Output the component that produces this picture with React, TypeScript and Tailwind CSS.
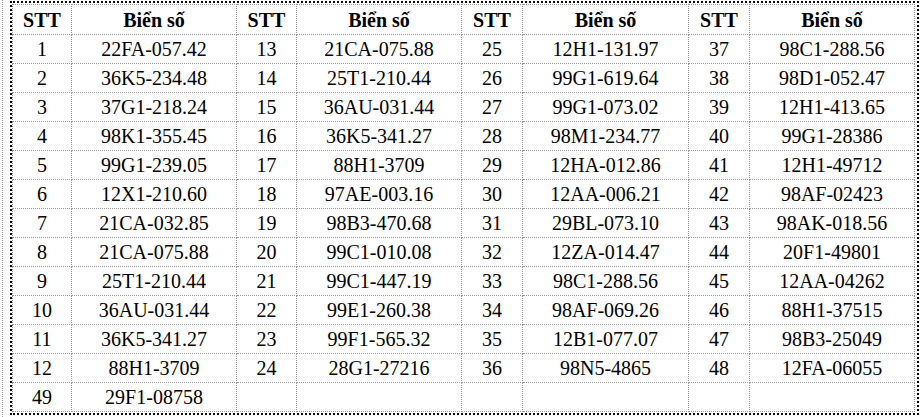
const columns = [
  [
    ["1", "22FA-057.42"],
    ["2", "36K5-234.48"],
    ["3", "37G1-218.24"],
    ["4", "98K1-355.45"],
    ["5", "99G1-239.05"],
    ["6", "12X1-210.60"],
    ["7", "21CA-032.85"],
    ["8", "21CA-075.88"],
    ["9", "25T1-210.44"],
    ["10", "36AU-031.44"],
    ["11", "36K5-341.27"],
    ["12", "88H1-3709"],
    ["49", "29F1-08758"],
  ],
  [
    ["13", "21CA-075.88"],
    ["14", "25T1-210.44"],
    ["15", "36AU-031.44"],
    ["16", "36K5-341.27"],
    ["17", "88H1-3709"],
    ["18", "97AE-003.16"],
    ["19", "98B3-470.68"],
    ["20", "99C1-010.08"],
    ["21", "99C1-447.19"],
    ["22", "99E1-260.38"],
    ["23", "99F1-565.32"],
    ["24", "28G1-27216"],
    ["", ""],
  ],
  [
    ["25", "12H1-131.97"],
    ["26", "99G1-619.64"],
    ["27", "99G1-073.02"],
    ["28", "98M1-234.77"],
    ["29", "12HA-012.86"],
    ["30", "12AA-006.21"],
    ["31", "29BL-073.10"],
    ["32", "12ZA-014.47"],
    ["33", "98C1-288.56"],
    ["34", "98AF-069.26"],
    ["35", "12B1-077.07"],
    ["36", "98N5-4865"],
    ["", ""],
  ],
  [
    ["37", "98C1-288.56"],
    ["38", "98D1-052.47"],
    ["39", "12H1-413.65"],
    ["40", "99G1-28386"],
    ["41", "12H1-49712"],
    ["42", "98AF-02423"],
    ["43", "98AK-018.56"],
    ["44", "20F1-49801"],
    ["45", "12AA-04262"],
    ["46", "88H1-37515"],
    ["47", "98B3-25049"],
    ["48", "12FA-06055"],
    ["", ""],
  ],
];

const widths = ["w-[59px]", "w-[165px]", "w-[60px]", "w-[165px]", "w-[61px]", "w-[166px]", "w-[61px]", "w-[165px]"];

const cell = "border border-dotted border-[#9a9a9a] text-center align-middle p-0";

export default function App() {
  const rows = columns[0].map((_, i) => columns.flatMap((col) => col[i]));

  return (
    <div className="w-[921px] h-[417px] bg-white flex overflow-hidden font-['Liberation_Serif','Times_New_Roman',serif] text-black">
      <div className="ml-[2px] w-0 h-full border-l border-dotted border-[#9a9a9a]" />
      <div className="ml-[7px] mt-[1px] self-start border-2 border-dotted border-black pt-[1px] pr-[2px] pb-[1px]">
        <table className="w-[902px] border-collapse table-fixed text-[20px] leading-none">
          <colgroup>
            {widths.map((w, i) => (
              <col key={i} className={w} />
            ))}
          </colgroup>
          <thead>
            <tr className="h-[30px]">
              {[0, 1, 2, 3].map((k) => (
                <>
                  <th key={`s${k}`} className={`${cell} font-bold`}>STT</th>
                  <th key={`b${k}`} className={`${cell} font-bold`}>Biển số</th>
                </>
              ))}
            </tr>
          </thead>
          <tbody>
            {rows.map((r, i) => (
              <tr key={i} className="h-[29px]">
                {r.map((v, j) => (
                  <td key={j} className={cell}>
                    {v}
                  </td>
                ))}
              </tr>
            ))}
          </tbody>
        </table>
      </div>
    </div>
  );
}
